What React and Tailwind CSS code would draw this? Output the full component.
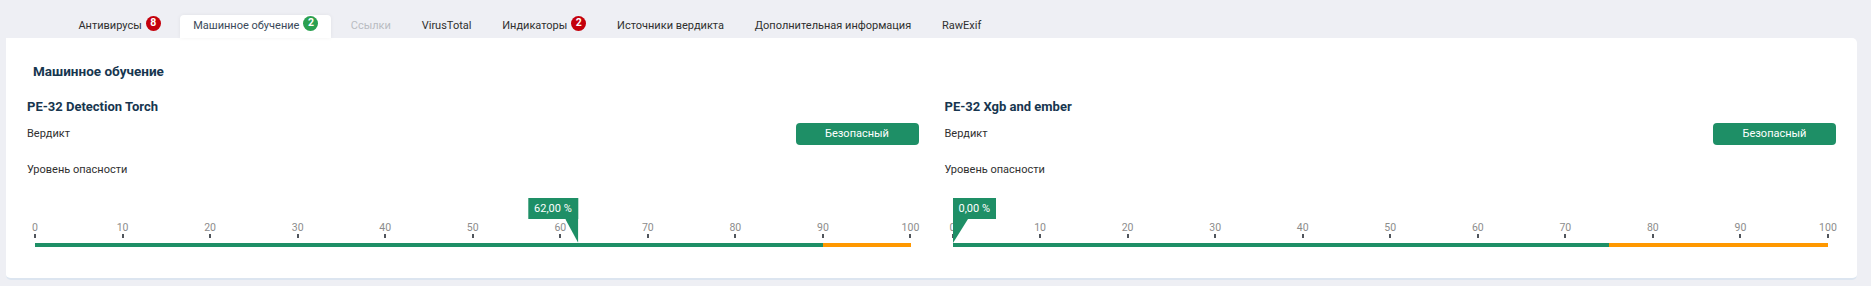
import React from "react";

const TABS = [
  { label: "Антивирусы", badge: "8", tone: "red" },
  { label: "Машинное обучение", badge: "2", tone: "green", active: true },
  { label: "Ссылки", disabled: true },
  { label: "VirusTotal" },
  { label: "Индикаторы", badge: "2", tone: "red" },
  { label: "Источники вердикта" },
  { label: "Дополнительная информация" },
  { label: "RawExif" },
];

const MODELS = [
  { name: "PE-32 Detection Torch", verdict: "Безопасный", value: 62, threshold: 90 },
  { name: "PE-32 Xgb and ember", verdict: "Безопасный", value: 0, threshold: 75 },
];

const TICKS = [0, 10, 20, 30, 40, 50, 60, 70, 80, 90, 100];

function Tab({ label, badge, tone, active, disabled }) {
  return (
    <div
      className={
        "flex h-[23px] items-center " +
        (active
          ? "mx-[4px] rounded-t-[4px] bg-white px-[13px] text-[#3a4a5a] shadow-[0_0_4px_rgba(0,0,0,0.06)]"
          : "px-[15.4px]")
      }
    >
      <span className={disabled ? "text-[#b9bcc2]" : active ? "" : "text-[#2f2f2f]"}>{label}</span>
      {badge && (
        <span
          className={
            "ml-1 -mt-[6px] flex h-[15px] w-[15px] items-center justify-center rounded-full text-[10.5px] font-bold leading-none text-white " +
            (tone === "green" ? "bg-[#2aa050]" : "bg-[#c4000c]")
          }
        >
          {badge}
        </span>
      )}
    </div>
  );
}

function Marker({ value }) {
  const right = value > 50;
  return (
    <div
      className={"absolute top-[-23px] flex flex-col " + (right ? "items-end" : "items-start")}
      style={{ left: `${value}%`, transform: right ? "translateX(-100%)" : "none" }}
    >
      <div className="h-[21px] whitespace-nowrap bg-[#1e8f66] px-[6px] text-[11px] leading-[21px] text-white">
        {value.toFixed(2).replace(".", ",")} %
      </div>
      <svg width={right ? 13 : 15} height="24" className="block">
        <polygon points={right ? "0,0 13,0 13,24" : "0,0 15,0 0,24"} fill="#1e8f66" />
      </svg>
    </div>
  );
}

function Scale({ value, threshold }) {
  return (
    <div className="mt-[41px] px-[8px]">
      <div className="relative">
        <div className="flex justify-between">
          {TICKS.map((t) => (
            <div key={t} className="flex w-0 flex-col items-center">
              <span className="text-[10.5px] leading-[13px] text-[#8c8c8c]">{t}</span>
              <span className="h-[4px] w-[2px] bg-[#50555c]" />
            </div>
          ))}
        </div>
        <div className="mt-[5px] flex h-[4px]">
          <div className="h-full bg-[#1e8f66]" style={{ width: `${threshold}%` }} />
          <div className="h-full flex-1 bg-[#ff9800]" />
        </div>
        <div className="absolute left-0 right-0 top-0">
          <Marker value={value} />
        </div>
      </div>
    </div>
  );
}

function ModelBlock({ name, verdict, value, threshold }) {
  return (
    <div className="flex flex-col">
      <h3 className="h-[20px] text-[13px] font-bold leading-[20px] text-[#17364f]">{name}</h3>
      <div className="mt-[6px] flex items-center justify-between">
        <span>Вердикт</span>
        <span className="flex h-[22px] w-[123px] items-center justify-center rounded-[4px] bg-[#1e8f66] text-white">
          {verdict}
        </span>
      </div>
      <div className="mt-[15px] h-[20px] leading-[20px]">Уровень опасности</div>
      <Scale value={value} threshold={threshold} />
    </div>
  );
}

export default function App() {
  return (
    <div className="h-[286px] w-[1871px] bg-[#eeeff4] pl-[6px] pr-[14px] font-['Roboto',sans-serif] text-[11px] text-[#2f2f2f]">
      <nav className="flex h-[38px] items-end pl-[57px]">
        {TABS.map((t) => (
          <Tab key={t.label} {...t} />
        ))}
      </nav>
      <section className="h-[242px] rounded-b-[5px] rounded-tr-[5px] border-b-2 border-[#dce5f0] bg-white px-[21px] pt-[23px]">
        <h2 className="ml-[6px] h-[20px] text-[13.5px] font-bold leading-[20px] text-[#17364f]">
          Машинное обучение
        </h2>
        <div className="mt-[16px] grid grid-cols-2 gap-[26px]">
          {MODELS.map((m) => (
            <ModelBlock key={m.name} {...m} />
          ))}
        </div>
      </section>
    </div>
  );
}
